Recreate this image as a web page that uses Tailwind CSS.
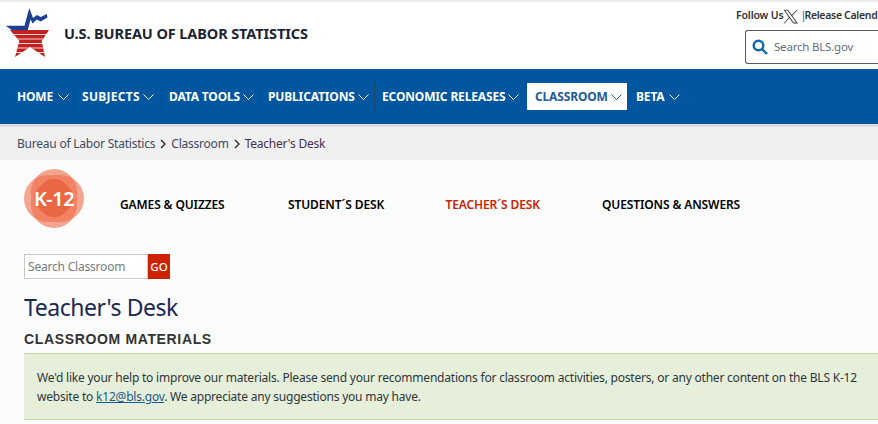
<!DOCTYPE html>
<html lang="en">
<head>
    <meta charset="UTF-8">
    <title>Teacher's Desk</title>
    <script src="https://cdn.jsdelivr.net/npm/@tailwindcss/browser@4"></script>
</head>
<body class="h-[424px] w-[878px] overflow-hidden bg-[#fcfcfc] font-['Noto_Sans',sans-serif] text-[#1f2d3d]">
    <!-- Header -->
    <header class="flex h-[69px] border-t-2 border-[#eeeeee] bg-white">
        <svg class="ml-[5px] mt-[6px] h-[50px] w-[44px] shrink-0" viewBox="5 8 44 50">
            <path fill="#c1211f" d="M10 30H49L41.700 41L45 57L30 47L15 57L19.300 41Z"/>
            <path fill="#fff" fill-opacity=".8" d="M10 34H46V35H10ZM15 38.500H43V39.500H15ZM15 43H43V44H15ZM15 47.500H44V48.500H15ZM15 52H45V53H15Z"/>
            <path fill="#1c3f94" d="M5.700 25.700H24.500L29.300 8L33 18L37 15L40.700 17L46.700 14L47.500 17.500L40.700 21.500L36.700 19.500L32.700 23.500L30.500 19.500L27.800 30H11.700Z"/>
        </svg>
        <div class="ml-[15px] mt-[21px] text-[14.500px] font-bold leading-5 tracking-[-0.1px] text-[#1c2434]">U.S. BUREAU OF LABOR STATISTICS</div>
        <div class="ml-auto w-[142px] shrink-0">
            <div class="mt-[4px] flex h-5 items-center whitespace-nowrap text-[10.500px] font-semibold tracking-[-0.15px] text-[#333]">
                Follow Us
                <svg class="h-[15px] w-[15px] shrink-0" viewBox="0 0 24 24"><path fill="#333" d="M1 1H8L14 9.500L22 1H23.500L14.800 10.700L24 23H16.500L10 14.500L2.500 23H1L9.300 13.300ZM3.500 2.500L17 21.500H21L7 2.500Z"/></svg>
                <span class="ml-[2px] w-[2px] text-[#2d7fc1]">|</span>
                <span class="ml-[2px] tracking-[-0.32px]">Release Calend</span>
            </div>
            <div class="ml-[9px] mt-[4px] flex h-[34px] w-[133px] items-center rounded-l-[3px] border-y border-l border-[#555b66] bg-white pl-[6px]">
                <svg class="h-[16px] w-[16px]" viewBox="0 0 16 16" fill="none" stroke="#0f6aa8" stroke-width="2.400"><circle cx="6.500" cy="6.500" r="4.800"/><path d="M10 10L15 15"/></svg>
                <span class="ml-[6px] text-[11.500px] tracking-[-0.2px] text-[#666d78]">Search BLS.gov</span>
            </div>
        </div>
    </header>

    <!-- Nav -->
    <nav class="flex h-[55px] items-center whitespace-nowrap bg-[#00569f] pl-[17px] text-[12px] font-bold tracking-[-0.15px] text-white">
        <div class="flex h-[27px] w-[57px] items-center border-r border-[#1f4668]">HOME
            <svg class="ml-[5px] h-[6px] w-[11px]" viewBox="0 0 11 6" fill="none" stroke="#fff"><path d="M.5.5L5.500 5.500L10.500.5"/></svg></div>
        <div class="flex h-[27px] w-[88px] items-center border-r border-[#1f4668] pl-2 tracking-[0.3px]">SUBJECTS
            <svg class="ml-[3px] h-[6px] w-[11px]" viewBox="0 0 11 6" fill="none" stroke="#fff"><path d="M.5.5L5.500 5.500L10.500.5"/></svg></div>
        <div class="flex h-[27px] w-[98px] items-center border-r border-[#1f4668] pl-[7px]">DATA TOOLS
            <svg class="ml-[3px] h-[6px] w-[11px]" viewBox="0 0 11 6" fill="none" stroke="#fff"><path d="M.5.5L5.500 5.500L10.500.5"/></svg></div>
        <div class="flex h-[27px] w-[115px] items-center border-r border-[#1f4668] pl-2">PUBLICATIONS
            <svg class="ml-[3px] h-[6px] w-[11px]" viewBox="0 0 11 6" fill="none" stroke="#fff"><path d="M.5.5L5.500 5.500L10.500.5"/></svg></div>
        <div class="flex h-[27px] w-[152px] items-center pl-[7px]">ECONOMIC RELEASES
            <svg class="ml-[3px] h-[6px] w-[11px]" viewBox="0 0 11 6" fill="none" stroke="#fff"><path d="M.5.5L5.500 5.500L10.500.5"/></svg></div>
        <div class="flex h-[27px] w-[100px] items-center bg-white pl-2 text-[#1d5c94]">CLASSROOM
            <svg class="ml-[3px] h-[6px] w-[11px]" viewBox="0 0 11 6" fill="none" stroke="#1d5c94"><path d="M.5.5L5.500 5.500L10.500.5"/></svg></div>
        <div class="flex h-[27px] items-center pl-[9px]">BETA
            <svg class="ml-[4px] h-[6px] w-[11px]" viewBox="0 0 11 6" fill="none" stroke="#fff"><path d="M.5.5L5.500 5.500L10.500.5"/></svg></div>
    </nav>

    <!-- Breadcrumb -->
    <div class="flex h-[36px] items-center border-t-[3px] border-[#dedede] bg-[#f0f0f0] pl-[17px] text-[12px] tracking-[-0.22px] text-[#3f4a63]">
        Bureau of Labor Statistics
        <svg class="mx-[5px] h-[10px] w-[6px]" viewBox="0 0 6 10" fill="none" stroke="#333" stroke-width="1.500"><path d="M1 1L5 5L1 9"/></svg>
        Classroom
        <svg class="mx-[5px] h-[10px] w-[6px]" viewBox="0 0 6 10" fill="none" stroke="#333" stroke-width="1.500"><path d="M1 1L5 5L1 9"/></svg>
        <span class="text-[#43304f]">Teacher's Desk</span>
    </div>

    <!-- K-12 subnav -->
    <div class="flex h-[76px] items-start pl-6 pt-[9px]">
        <div class="relative flex h-[59px] w-[60px] items-center justify-center">
            <div class="absolute left-0 top-[6px] h-[47px] w-[60px] rounded-full bg-[#ee6a48]/60"></div>
            <div class="absolute left-[7px] top-0 h-[59px] w-[46px] rounded-full bg-[#ee6a48]/60"></div>
            <div class="absolute left-[12px] top-[11px] h-[36px] w-[36px] rotate-45 rounded-[15px] bg-[#e5552c]/60"></div>
            <span class="relative text-[20px] font-semibold tracking-[-0.5px] text-white">K-12</span>
        </div>
        <div class="ml-[36px] mt-[27px] flex whitespace-nowrap text-[12px] font-semibold tracking-[-0.12px] text-black">
            <span class="w-[168px]">GAMES &amp; QUIZZES</span>
            <span class="w-[157.500px]">STUDENT´S DESK</span>
            <span class="w-[156.500px] text-[#cc2200]">TEACHER´S DESK</span>
            <span>QUESTIONS &amp; ANSWERS</span>
        </div>
    </div>

    <!-- Main -->
    <main class="pl-6">
        <div class="mt-[18px] flex h-[25px]">
            <div class="flex w-[124px] items-center border border-[#c8c8c8] bg-white pl-[3px] text-[12px] tracking-[-0.2px] text-[#767b82]">Search Classroom</div>
            <div class="flex w-[22px] items-center justify-center bg-[#cc2200] text-[11.500px] font-medium text-white">GO</div>
        </div>
        <h1 class="mt-[12px] text-[23px] leading-[32px] tracking-[-0.45px] text-[#1b2a55]">Teacher's Desk</h1>
        <h2 class="mt-[6px] font-['Liberation_Sans',sans-serif] text-[14px] font-bold leading-[20px] tracking-[0.65px] text-[#333]">CLASSROOM MATERIALS</h2>
        <div class="mt-[4px] h-[67px] w-full border-y border-[#c6d9a0] bg-[#e6efd9] pl-[13px] pt-[14px] text-[12px] leading-[19px] tracking-[-0.21px] text-[#2f3640]">
            <p class="whitespace-nowrap">We'd like your help to improve our materials. Please send your recommendations for classroom activities, posters, or any other content on the BLS K-12</p>
            <p class="whitespace-nowrap">website to <a class="text-[#1a5a8a] underline" href="#">k12@bls.gov</a>. We appreciate any suggestions you may have.</p>
        </div>
    </main>
</body>
</html>
